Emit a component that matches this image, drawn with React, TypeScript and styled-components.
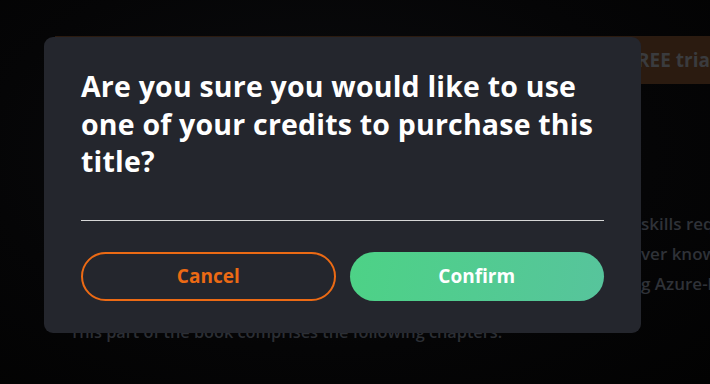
import React from 'react';
import styled, { createGlobalStyle } from 'styled-components';

const GlobalStyle = createGlobalStyle`
	html, body {
		margin: 0;
		padding: 0;
		background: #030304;
		overflow: hidden;
	}
	* {
		box-sizing: border-box;
	}
`;

const Page = styled.div`
	position: relative;
	width: 710px;
	height: 384px;
	overflow: hidden;
	background: radial-gradient(ellipse at 45% 40%, #0b0c0f 0%, #050506 60%, #020202 100%);
	font-family: 'Open Sans', 'Liberation Sans', sans-serif;
`;

const Article = styled.div`
	display: flex;
	flex-direction: column;
	padding: 36px 0 0 55px;
`;

const TrialBanner = styled.div`
	height: 48px;
	width: 720px;
	background: #2b1b10;
	display: flex;
	align-items: center;
	padding-left: 471px;
	font-size: 19px;
	font-weight: 700;
	color: #3a3b3e;
	white-space: nowrap;
`;

const SideText = styled.div`
	display: flex;
	flex-direction: column;
	gap: 8px;
	padding: 129px 0 0 586px;
	font-size: 17px;
	font-weight: 600;
	color: #2f3238;
	white-space: nowrap;
	line-height: 22px;
`;

const Lead = styled.p`
	margin: 26px 0 0 15px;
	font-size: 16.3px;
	font-weight: 600;
	line-height: 22px;
	color: #2c2f35;
	white-space: nowrap;
`;

const Overlay = styled.div`
	position: absolute;
	inset: 0;
	padding: 37px 0 0 44px;
`;

const Modal = styled.div`
	width: 597px;
	height: 296px;
	background: #24262d;
	border-radius: 9px;
	padding: 31px 37px 0 37px;
	display: flex;
	flex-direction: column;
`;

const Title = styled.h2`
	margin: 0;
	font-size: 28.5px;
	line-height: 37.5px;
	font-weight: 700;
	color: #ffffff;
	letter-spacing: 0.2px;
	white-space: nowrap;
`;

const Divider = styled.hr`
	margin: 39px 0 0 0;
	border: none;
	height: 1px;
	background: #d6d6d6;
`;

const Actions = styled.div`
	display: grid;
	grid-template-columns: 1fr 1fr;
	gap: 14px;
	margin-top: 31px;
`;

const ActionButton = styled.button<{ $primary?: boolean }>`
	height: 49px;
	border-radius: 25px;
	font-family: 'Open Sans', 'Liberation Sans', sans-serif;
	font-size: 19px;
	font-weight: 700;
	cursor: pointer;
	border: ${({ $primary }) => ($primary ? 'none' : '2px solid #ec6a14')};
	color: ${({ $primary }) => ($primary ? '#ffffff' : '#ec6a14')};
	background: ${({ $primary }) =>
		$primary ? 'linear-gradient(100deg, #4dd286 0%, #57c49c 100%)' : 'transparent'};
`;

export default function App(): React.ReactElement {
	return (
		<Page>
			<GlobalStyle />
			<Article>
				<TrialBanner>Start your FREE trial</TrialBanner>
				<SideText>
					<span>skills required</span>
					<span>ver knowledge</span>
					<span>g Azure-based</span>
				</SideText>
				<Lead>This part of the book comprises the following chapters:</Lead>
			</Article>
			<Overlay>
				<Modal>
					<Title>
						Are you sure you would like to use
						<br />
						one of your credits to purchase this
						<br />
						title?
					</Title>
					<Divider />
					<Actions>
						<ActionButton>Cancel</ActionButton>
						<ActionButton $primary>Confirm</ActionButton>
					</Actions>
				</Modal>
			</Overlay>
		</Page>
	);
}
